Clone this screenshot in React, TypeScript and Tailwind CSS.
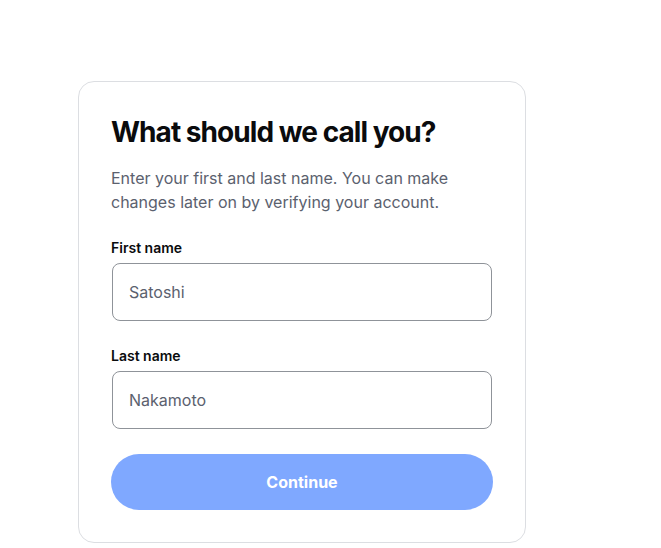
export default function App() {
  return (
    <div className="min-h-[548px] bg-white font-['Inter',sans-serif]">
      <div className="pl-[78px] pt-[81px]">
        <div className="w-[448px] rounded-2xl border border-[#dcdee2] bg-white p-8">
          <h1 className="text-[28px] font-bold leading-9 tracking-[-0.034em] text-[#0a0b0d]">
            What should we call you?
          </h1>
          <p className="mt-4 text-base leading-6 text-[#5b616e]">
            Enter your first and last name. You can make changes later on by verifying your account.
          </p>

          <label className="mt-6 block text-sm font-semibold leading-5 text-[#0a0b0d]">
            First name
          </label>
          <input
            defaultValue="Satoshi"
            className="mx-px mt-[5px] block h-[58px] w-[380px] rounded-lg border border-[#8f9399] px-4 text-base text-[#5b616e] outline-none"
          />

          <label className="mt-[25px] block text-sm font-semibold leading-5 text-[#0a0b0d]">
            Last name
          </label>
          <input
            defaultValue="Nakamoto"
            className="mx-px mt-[5px] block h-[58px] w-[380px] rounded-lg border border-[#8f9399] px-4 text-base text-[#5b616e] outline-none"
          />

          <button className="mt-[25px] flex h-14 w-full items-center justify-center rounded-full bg-[#7fa8ff] text-base font-bold text-white">
            Continue
          </button>
        </div>
      </div>
    </div>
  );
}
